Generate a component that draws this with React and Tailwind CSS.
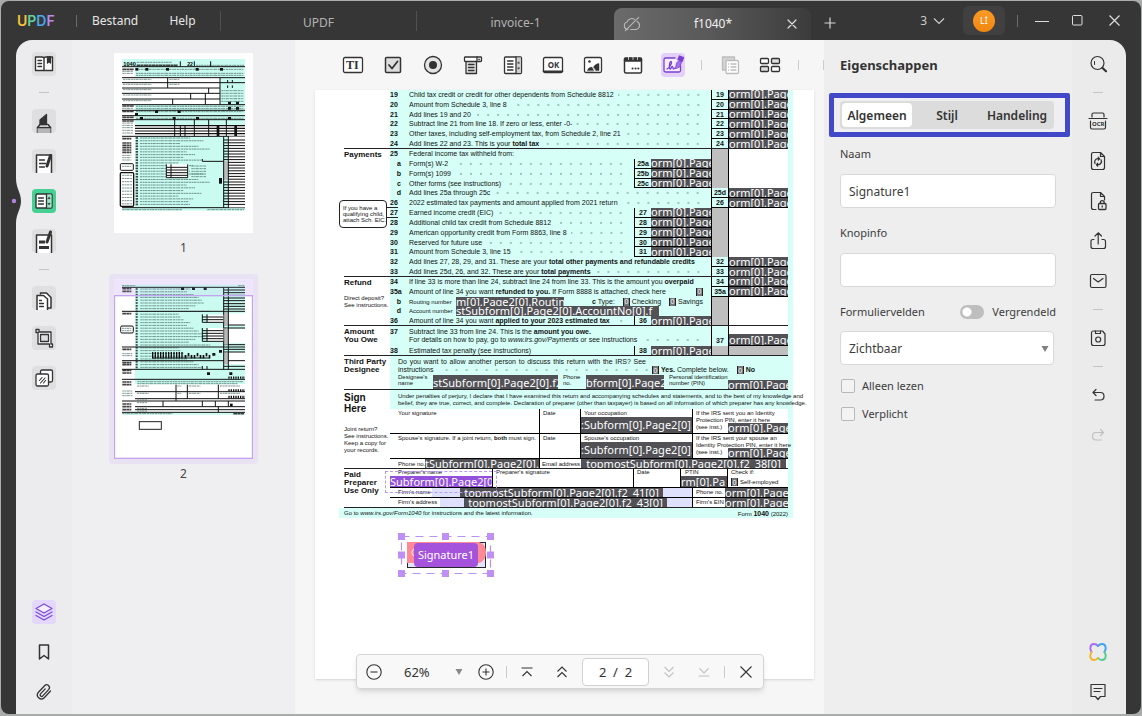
import React from "react";

const UI = "font-['Noto_Sans','Open_Sans',sans-serif]";

function Icon({ children, size = 24, className = "text-[#333333]" }) {
  return (
    <svg
      width={size}
      height={size}
      viewBox="0 0 24 24"
      fill="none"
      stroke="currentColor"
      strokeWidth="1.3"
      strokeLinecap="round"
      strokeLinejoin="round"
      className={className}
      aria-hidden="true"
    >
      {children}
    </svg>
  );
}

/* ---------- title bar ---------- */

function TitleBar() {
  return (
    <header className="flex h-[39px] shrink-0 items-center text-[12px] text-[#e6e6e6]">
      <div className="flex w-[75px] items-center pl-4 font-['Inter',sans-serif] text-[14px] font-semibold">
        <span className="text-[#f6c33a]">U</span>
        <span className="text-[#5fd39a]">P</span>
        <span className="text-[#4ba7e8]">D</span>
        <span className="text-[#b98cf2]">F</span>
      </div>
      <div className="h-3 w-px bg-[#6b6b6b]" />
      <button className="ml-[15px] w-[45px] whitespace-nowrap">Bestand</button>
      <button className="ml-8 w-[27px]">Help</button>
      <div className="ml-6 h-5 w-px bg-[#505050]" />
      <button className="mt-1 w-[195px] text-[#b4b4b4]">UPDF</button>
      <div className="h-5 w-px bg-[#505050]" />
      <button className="mt-1 w-[197px] text-[#b4b4b4]">invoice-1</button>
      <div className="flex h-8 w-[197px] items-center self-end rounded-t-lg bg-linear-to-r from-[#6b6b6b] via-[#585858] to-[#3c3c3c] px-2">
        <Icon size={20} className="text-[#b9b9b9]">
          <path d="M7 18.5a4.5 4.5 0 0 1-1-8.8A6 6 0 0 1 15 6.5M18 9a5 5 0 0 1-1 9.5h-6.500M4 20 20 4" />
        </Icon>
        <button className="flex-1 text-center text-[#f0f0f0]">f1040*</button>
        <button aria-label="Tabblad sluiten" className="pr-[3px]">
          <Icon size={16} className="text-[#e0e0e0]">
            <path d="M6 6 18 18M18 6 6 18" strokeWidth="1.8" />
          </Icon>
        </button>
      </div>
      <button aria-label="Nieuw tabblad" className="mt-1 ml-3">
        <svg width="14" height="14" viewBox="0 0 14 14" stroke="#d8d8d8" strokeWidth="1.2">
          <path d="M7 1.500V12.500M1.500 7H12.500" />
        </svg>
      </button>
      <div className="ml-auto flex items-center">
        <button className="flex items-center gap-[6px] pr-[18px] text-[#cccccc]">
          3
          <svg width="12" height="8" viewBox="0 0 12 8" fill="none" stroke="#cccccc" strokeWidth="1.2">
            <path d="M1 1.500 6 6.500 11 1.500" />
          </svg>
        </button>
        <div className="flex h-[29px] w-[42px] items-center justify-center rounded-md bg-[#404040]">
          <button className="h-[22px] w-[22px] rounded-full bg-linear-to-b from-[#fb9a26] to-[#f0860d] text-[9px] leading-[22px] text-white">
            Lİ
          </button>
        </div>
        <div className="ml-3 h-3 w-px bg-[#6b6b6b]" />
        <button aria-label="Minimaliseren" className="ml-[17px]">
          <svg width="14" height="14" viewBox="0 0 14 14" stroke="#dddddd">
            <path d="M0 7.500H14" />
          </svg>
        </button>
        <button aria-label="Maximaliseren" className="ml-[23px]">
          <svg width="11" height="11" viewBox="0 0 11 11" fill="none" stroke="#dddddd">
            <rect x="0.500" y="0.500" width="9.500" height="9.500" rx="1" />
          </svg>
        </button>
        <button aria-label="Sluiten" className="mr-[21px] ml-[26px]">
          <svg width="11" height="11" viewBox="0 0 11 11" stroke="#dddddd" strokeWidth="1.200">
            <path d="M0.500 0.500 10.500 10.500M10.500 0.500 0.500 10.500" />
          </svg>
        </button>
      </div>
    </header>
  );
}

/* ---------- left strip ---------- */

function ToolButton({ label, active, children }) {
  return (
    <button
      aria-label={label}
      className={
        "h-6 w-6 overflow-hidden rounded " +
        (active ? "bg-[#47d094]" : "bg-[#dfdfe1]")
      }
    >
      {children}
    </button>
  );
}

function Sep() {
  return <div className="h-px w-[10px] bg-[#c4c4c4]" />;
}

function LeftStrip() {
  return (
    <nav className="relative flex w-14 shrink-0 flex-col items-center gap-4 rounded-tl-2xl bg-[#ececee] pt-3 pb-[10px]">
      <svg className="absolute top-[138px] left-[-6px]" width="12" height="46" viewBox="0 0 12 46" aria-hidden="true">
        <path d="M0 0H6C6 11 11 14 11 23S6 35 6 46H0Z" fill="#363636" />
        <circle cx="4" cy="23" r="2.200" fill="#b184e0" />
      </svg>
      <ToolButton label="Lezer">
        <Icon>
          <path d="M3.500 5h6.500q2 0 2 1.500V18.500H3.500ZM12 6.500Q12 5 14 5h6.500V18.500H12M6 8.500h3.500M6 11.500h3.500M6 14.500h3.500" fill="#fff" strokeWidth="1.400" />
          <path d="M15.500 5h3v6l-1.500-1.400L15.500 11Z" fill="#333" />
        </Icon>
      </ToolButton>
      <Sep />
      <ToolButton label="Opmerking">
        <Icon>
          <path d="M5.500 24v-5.500l2.500-3h8l2.500 3V24" fill="#fff" strokeWidth="1.500" />
          <path d="M5.500 18.500h13V24h-13Z" fill="#b5b5b5" stroke="none" />
          <path d="M8 15.500v-4.500L14.500 5.500V15.500Z" fill="#333" />
          <path d="M5.500 18.500h13" />
        </Icon>
      </ToolButton>
      <ToolButton label="Bewerken">
        <Icon>
          <path d="M4.500 24V6h15v18" fill="#fff" strokeWidth="1.500" />
          <path d="M7.500 11h5M7.500 14.500h6M7.500 18h5" />
          <path d="M18.500 6.500 15 17" strokeWidth="3" />
        </Icon>
      </ToolButton>
      <ToolButton label="Formulier" active>
        <Icon>
          <rect x="4" y="5" width="16" height="14" rx="1" fill="#fff" strokeWidth="1.400" />
          <path d="M14.500 5.500h5v13h-5Z" fill="#9ce6c6" stroke="none" />
          <path d="M14.500 5v14M6.500 9h5M6.500 12h5M6.500 15h5" />
          <path d="m17.200 8.300 1 1.400h-2ZM17.200 15.700l1-1.400h-2Z" fill="#333" strokeWidth="0.600" />
        </Icon>
      </ToolButton>
      <ToolButton label="Redigeren">
        <Icon>
          <path d="M4.500 24V6h15v18" fill="#fff" strokeWidth="1.500" />
          <path d="M7 13h6M7 18.500h10" strokeWidth="2.800" strokeLinecap="butt" />
          <path d="M18.500 3 15 13" strokeWidth="3" />
        </Icon>
      </ToolButton>
      <Sep />
      <ToolButton label="Pagina's organiseren">
        <Icon>
          <path d="M8.500 8V7h6l4.500 4.500V22h-3" fill="#fff" strokeWidth="1.500" />
          <path d="M5 24V9.500h6.500L15.500 13v11" fill="#fff" strokeWidth="1.500" />
          <path d="M7.500 14.500h2M7.500 17.500h4M7.500 20.500h4" />
        </Icon>
      </ToolButton>
      <ToolButton label="Bijsnijden">
        <Icon>
          <path
            d="M4 3.500h3V6h12v12h1.500v3h-3V18H6V6.500H4ZM8.500 8.500v7h8v-7Z"
            fill="#fff"
            fillRule="evenodd"
          />
        </Icon>
      </ToolButton>
      <ToolButton label="Watermerk">
        <Icon>
          <rect x="8.500" y="4" width="12" height="12" rx="1.500" fill="#fff" />
          <rect x="4" y="8" width="12.500" height="12" rx="1.500" fill="#fff" />
          <path d="m7.500 14.500 2.500-3M8.500 17l4.500-5M11.500 17l2-2.500" strokeWidth="1.100" />
        </Icon>
      </ToolButton>
      <div className="flex-1" />
      <button aria-label="Lagen" className="h-6 w-6 rounded bg-[#e3d8fb]">
        <Icon className="text-[#7c4be0]">
          <path d="m12 4 8 4.500-8 4.500-8-4.500Z" fill="#f3edff" />
          <path d="m4 12 8 4.500 8-4.500M4 15.500 12 20l8-4.500" />
        </Icon>
      </button>
      <button aria-label="Bladwijzer" className="h-6 w-6">
        <Icon>
          <path d="M7.500 5h9v14L12 15.500 7.500 19Z" strokeWidth="1.500" />
        </Icon>
      </button>
      <button aria-label="Bijlage" className="h-6 w-6">
        <Icon>
          <path d="m18.500 11-6.300 6.800a4 4 0 0 1-5.800-5.500l6.200-6.600a2.800 2.800 0 0 1 4.200 3.700l-6 6.500a1.500 1.500 0 0 1-2.300-2l4.700-5" strokeWidth="1.300" />
        </Icon>
      </button>
    </nav>
  );
}

/* ---------- thumbnails ---------- */

const seq = (n) => Array.from({ length: n }, (_, i) => i);

function MicroText({ x, y, w, bold }) {
  return (
    <line
      x1={x}
      x2={x + w}
      y1={y}
      y2={y}
      stroke={bold ? "#222" : "#4a6a66"}
      strokeWidth={bold ? 5 : 3}
      strokeDasharray={bold ? "12 1 8 1" : "7 1.500 4 1 9 2"}
      opacity={bold ? 0.85 : 0.7}
    />
  );
}

function Bars({ d, w = 3 }) {
  return <path d={d} stroke="#111" strokeWidth={w} fill="none" />;
}

const WIDTHS = [150, 190, 120, 175, 210, 140, 165, 130, 185, 115, 160, 145];

function ThumbOne() {
  return (
    <svg viewBox="342 39 417 540" className="block h-[180px] w-[139px]" aria-hidden="true">
      <rect x="342" y="39" width="417" height="540" fill="#fff" />
      <path d="M366 57H735V82H366ZM405 82H735V112H405ZM660 112H735V193H660ZM405 193H735V240H405ZM405 240H735V256H405ZM405 288H735V512H405ZM366 500H735V512H366Z" fill="#c9fbf0" />
      <text x="370" y="78" fontSize="17" fontWeight="700" fontFamily="Liberation Sans">1040</text>
      <MicroText x={410} y={67} w={105} />
      <MicroText x={410} y={76} w={124} bold />
      <text x="562" y="77" fontSize="15" fontWeight="700" fontFamily="Liberation Sans">22</text>
      <MicroText x={588} y={76} w={144} />
      <Bars d="M541 64V80M583 64V80M632 64V80" />
      <Bars d="M366 80H735M366 113H735M366 128H735M366 144H660M366 160H660M366 177H660M366 194H735M366 211H735M366 227H735M366 239H735M366 289H735M366 503H735" />
      <Bars d="M503 113V144M626 144V160M572 160V177M616 160V194M518 177V194M660 113V194M683 120V128M697 120V128M683 136V144M697 136V144M524 239V289M583 239V289M626 239V289M679 239V289" />
      {[88, 198, 214, 232, 243].map((y) => (
        <MicroText key={y} x={367} y={y} w={35} bold />
      ))}
      {[94, 100, 205, 249, 256, 263, 271, 279].map((y) => (
        <MicroText key={y} x={367} y={y} w={32} />
      ))}
      {[88, 100, 106, 199, 206, 215, 235].map((y) => (
        <MicroText key={y} x={408} y={y} w={322} />
      ))}
      {[118, 133, 149, 165, 182].map((y) => (
        <MicroText key={y} x={369} y={y} w={85} />
      ))}
      {[118, 133].map((y) => (
        <MicroText key={y} x={508} y={y} w={30} />
      ))}
      {[152, 160, 168, 176, 184].map((y) => (
        <MicroText key={y} x={664} y={y} w={66} />
      ))}
      {[406, 436, 498, 587, 660].map((x) => (
        <rect key={x} x={x} y="84" width="9" height="8" fill="#111" />
      ))}
      {[465, 533].map((x) => (
        <rect key={x} x={x} y="211" width="9" height="8" fill="#111" />
      ))}
      {[420, 518, 588, 684].map((x) => (
        <rect key={x} x={x} y="231" width="9" height="8" fill="#111" />
      ))}
      {[684, 708].map((x) => (
        <path key={x} d={`M${x} 185h9v8h-9ZM${x} 201h9v8h-9Z`} fill="#111" />
      ))}
      <rect x="405" y="219" width="9" height="8" fill="#111" />
      <Bars d="M405 257H735M405 265H735M405 273H735M405 281H735" w={3.500} />
      <Bars d="M541 257V289M555 257V289" />
      {[650, 703].map((x) => (
        <rect key={x} x={x} y="257" width="8" height="31" fill="#111" />
      ))}
      {seq(25).map((i) => (
        <g key={i}>
          <MicroText x={420} y={294 + i * 8.300} w={WIDTHS[i % 12]} />
          <MicroText x={407} y={294 + i * 8.300} w={7} bold />
        </g>
      ))}
      <rect x="686" y="290" width="49" height="212" fill="#fff" />
      {seq(24).map((i) => (
        <path key={i} d={`M671 ${300 + i * 8.400}H735`} stroke="#111" strokeWidth="3" />
      ))}
      <rect x="671" y="364" width="13" height="56" fill="#bdbdbd" />
      <Bars d="M671 289V503M685 289V503" />
      <rect x="499" y="373" width="66" height="40" fill="#fff" />
      <Bars d="M499 373V413M513 373V413M499 382H563M499 390H563M499 398H563M499 406H563M499 413H563M563 373V413M607 357V364H671" />
      {[378, 386, 394, 402, 410].map((y) => (
        <MicroText key={y} x={574} y={y} w={44} />
      ))}
      <rect x="657" y="414" width="9" height="17" fill="#111" />
      {[296, 309, 316, 323, 330, 337].map((y) => (
        <MicroText key={y} x={367} y={y} w={27} bold />
      ))}
      {[346, 353, 360].map((y) => (
        <MicroText key={y} x={367} y={y} w={27} />
      ))}
      <rect x="361" y="371" width="39" height="20" rx="3" fill="#fff" stroke="#111" strokeWidth="3" />
      <MicroText x={366} y={379} w={28} />
      <rect x="361" y="398" width="40" height="101" rx="3" fill="#fff" stroke="#111" strokeWidth="4" />
      {seq(10).map((i) => (
        <MicroText key={i} x={366} y={406 + i * 9.500} w={30} />
      ))}
      <MicroText x={367} y={509} w={180} />
      <MicroText x={622} y={509} w={110} />
    </svg>
  );
}

function ThumbTwo() {
  return (
    <svg viewBox="342 147 417 540" className="block h-[180px] w-[139px]" aria-hidden="true">
      <rect x="342" y="147" width="417" height="540" fill="#fff" />
      <rect x="342" y="147" width="417" height="50" fill="#f4eefe" />
      <path d="M366 164H735V171H366ZM405 171H735V463H405ZM366 546H735V554H366Z" fill="#c9fbf0" />
      <path d="M686 250H735V285H686ZM686 296H735V340H686ZM686 366H735V403H686Z" fill="#fff" />
      <MicroText x={366} y={167} w={40} />
      <MicroText x={715} y={167} w={18} />
      {seq(29).map((i) => (
        <g key={i}>
          <MicroText x={421} y={177 + i * 8.400} w={WIDTHS[(i * 5) % 12]} />
          <MicroText x={407} y={177 + i * 8.400} w={6} bold />
        </g>
      ))}
      {[176, 184, 251, 358, 398, 404, 421, 429, 456, 464, 522, 530, 539].map((y) => (
        <MicroText key={y} x={367} y={y} w={27} bold />
      ))}
      {[371, 377, 483, 490, 497].map((y) => (
        <MicroText key={y} x={367} y={y} w={30} />
      ))}
      <Bars d="M366 172H735M366 244H735M366 351H735M366 392H735M366 418H735M366 448H735" />
      {[180, 188, 196, 204, 212, 221, 229, 237, 285, 294, 344, 358, 366, 409].map((y) => (
        <path key={y} d={`M671 ${y}H735`} stroke="#111" strokeWidth="3" />
      ))}
      <rect x="672" y="246" width="12" height="42" fill="#b8b8b8" />
      <rect x="672" y="296" width="12" height="48" fill="#b8b8b8" />
      <rect x="672" y="368" width="12" height="35" fill="#b8b8b8" />
      <Bars d="M671 172V418M685 172V418" />
      <path d="M623 254H670V277H623ZM623 294H670V334H623Z" fill="#fff" />
      <Bars d="M607 253V277M621 253V277M607 261H670M607 269H670M607 277H670M607 294V334M621 294V334M607 302H670M607 310H670M607 318H670M607 326H670M607 334H670M607 408V418M621 408V418" />
      {seq(12).map((i) => (
        <rect key={i} x={456 + i * 8} y="366" width="4" height="19" fill="#111" />
      ))}
      {seq(9).map((i) => (
        <rect key={i} x={554 + i * 9} y={i % 3 === 1 ? 369 : 375} width="5" height="10" fill="#111" />
      ))}
      <Bars d="M456 384H630" />
      {[543, 576, 611].map((x) => (
        <rect key={x} x={x} y="172" width="9" height="8" fill="#111" />
      ))}
      <path d="M657 360h9v8h-9ZM637 369h9v8h-9ZM621 427h9v8h-9ZM688 427h9v8h-9Z" fill="#111" />
      <rect x="405" y="464" width="330" height="82" fill="#fff" />
      {[443, 481, 501].map((y) => (
        <path key={y} d={`M685 ${y}H735`} stroke="#111" strokeWidth="7" strokeDasharray="4 3" />
      ))}
      <Bars d="M528 464V513M562 464V506M655 464V506M489 513V530M607 513V530M646 513V530M685 513V530M655 530V547M405 485H735M405 506H735M366 513H735M405 530H735M405 539H735M366 547H735" />
      <rect x="690" y="521" width="8" height="8" fill="#111" />
      {[468, 490].map((y) => (
        <g key={y}>
          <MicroText x={411} y={y} w={35} />
          <MicroText x={532} y={y} w={12} />
          <MicroText x={566} y={y} w={35} />
          <MicroText x={660} y={y} w={60} />
        </g>
      ))}
      {[510, 518, 535, 543].map((y) => (
        <MicroText key={y} x={411} y={y} w={30} />
      ))}
      <MicroText x={412} y={455} w={318} />
      <MicroText x={412} y={461} w={300} />
      <rect x="362" y="288" width="38" height="21" rx="4" fill="#fff" stroke="#111" strokeWidth="3" />
      <MicroText x={366} y={295} w={28} />
      <MicroText x={366} y={302} w={28} />
      <MicroText x={367} y={551} w={150} />
      <MicroText x={700} y={551} w={32} bold />
      <rect x="418" y="575" width="66" height="23" fill="#fff" stroke="#222" strokeWidth="3" />
      <path d="M342 148H758V197H342Z" fill="#c9a8f5" opacity="0.120" />
      <rect x="343.500" y="197" width="414" height="488" fill="none" stroke="#c2a4ef" strokeWidth="4" />
    </svg>
  );
}

function Thumbnails() {
  return (
    <aside className="flex w-[223px] shrink-0 flex-col items-center bg-[#efeff1] pt-[13px] text-[12px] text-[#444444]">
      <figure className="flex flex-col items-center">
        <ThumbOne />
        <figcaption className="mt-[5px] leading-5">1</figcaption>
      </figure>
      <figure className="mt-4 flex flex-col items-center">
        <div className="rounded bg-[#e8e2f3] p-[5px]">
          <ThumbTwo />
        </div>
        <figcaption className="leading-5">2</figcaption>
      </figure>
    </aside>
  );
}

/* ---------- form toolbar ---------- */

function FormToolbar() {
  return (
    <div className="flex h-[50px] shrink-0 items-center gap-4 overflow-hidden pl-[46px]">
      <button aria-label="Tekstveld" className="h-6 w-6 shrink-0">
        <Icon>
          <rect x="2.500" y="4.500" width="19" height="15" rx="1.500" fill="#fff" strokeWidth="1.300" />
          <text x="5" y="16.300" fontSize="12" fontWeight="700" fontFamily="Liberation Serif" fill="#333" stroke="none">TI</text>
        </Icon>
      </button>
      <button aria-label="Selectievakje" className="h-6 w-6 shrink-0">
        <Icon>
          <rect x="4.500" y="4.500" width="15" height="15" rx="1" fill="#dedede" strokeWidth="1.500" />
          <path d="m8 12 3 3.500 5.500-7" strokeWidth="1.800" />
        </Icon>
      </button>
      <button aria-label="Keuzerondje" className="h-6 w-6 shrink-0">
        <Icon>
          <circle cx="12" cy="12" r="8.500" fill="#e4e4e4" />
          <circle cx="12" cy="12" r="4" fill="#333" stroke="none" />
        </Icon>
      </button>
      <button aria-label="Vervolgkeuzelijst" className="h-6 w-6 shrink-0">
        <Icon>
          <path d="M5 8h10.500v12.500H5Z" fill="#dedede" />
          <rect x="3.500" y="4" width="17" height="4.500" rx="0.800" fill="#fff" />
          <path d="M16 4v4M7.500 11.500h5.500M7.500 14.500h5.500M7.500 17.500h5.500" />
          <path d="m18.300 7 .8-1h-1.600Z" fill="#333" strokeWidth="0.500" />
        </Icon>
      </button>
      <button aria-label="Keuzelijst" className="h-6 w-6 shrink-0">
        <Icon>
          <rect x="3.500" y="4" width="17" height="16.500" rx="1" fill="#fff" />
          <path d="M15 4.500h5v15.500h-5Z" fill="#cfcfcf" stroke="none" />
          <path d="M15 4v16.500M6.500 8h5.500M6.500 11h5.500M6.500 14h5.500M6.500 17h5.500" />
          <path d="m17.700 9 .9 1.200h-1.800ZM17.700 16l.9-1.200h-1.800Z" fill="#333" strokeWidth="0.500" />
        </Icon>
      </button>
      <button aria-label="Knop" className="h-6 w-6 shrink-0">
        <Icon>
          <rect x="2.500" y="4.500" width="19" height="15" rx="1.500" fill="#fff" />
          <path d="M2.500 18.300h19" strokeWidth="1.800" />
          <text x="6.700" y="14.500" fontSize="8" fontWeight="700" fontFamily="Noto Sans" fill="#333" stroke="none">OK</text>
        </Icon>
      </button>
      <button aria-label="Afbeelding" className="h-6 w-6 shrink-0">
        <Icon>
          <rect x="3.500" y="4.500" width="17" height="15" rx="1.500" fill="#fff" />
          <path d="M6.500 17.500q1-3.500 4.500-3.200l1.500 3.200ZM12.500 14q2-3.500 5.500-3.500v7h-3Z" fill="#333" strokeWidth="0.500" />
          <circle cx="8.500" cy="8.500" r="1.300" fill="#333" stroke="none" />
        </Icon>
      </button>
      <button aria-label="Datum" className="h-6 w-6 shrink-0">
        <Icon>
          <rect x="3.500" y="5" width="17" height="15" rx="1.500" fill="#fff" strokeWidth="1.500" />
          <path d="M3.500 8V5.500h17V8Z" fill="#333" />
          <path d="M7.500 3.500v3M12 3.500v3M16.500 3.500v3" stroke="#fff" strokeWidth="0.700" />
          <path d="M11.500 15.500h.1M14.500 15.500h.1M17.300 15.500h.1" strokeWidth="2" />
        </Icon>
      </button>
      <button aria-label="Handtekening" className="h-6 w-6 shrink-0 rounded bg-[#e2d0fb]">
        <Icon className="text-[#7b3fd0]">
          <path d="M14 5H4.500Q3 5 3 6.500V17.500Q3 19 4.500 19H18q1.500 0 1.500-1.500V13" fill="#f5efff" />
          <path d="M6 16c4-2 5.500-8 3.800-7.500C8 9 8 17 9.500 16c1-.8 1-3 2-2.500.8.300 0 2.500 1 2.500l1.500-1" strokeWidth="1.300" />
          <path d="m14.500 15.500 1-5.500 2.500-2.500 2.500 2-1.500 4Z" fill="#a46cf0" strokeWidth="0.800" />
          <path d="m17 6.500 1.500-3.500 4 1.500-1.500 4Z" fill="#7b3fd0" />
        </Icon>
      </button>
      <div className="h-[10px] w-px shrink-0 bg-[#cccccc]" />
      <button aria-label="Kopiëren" className="h-6 w-6 shrink-0">
        <Icon className="text-[#bcbcbc]">
          <path d="M4.500 4H17v4H8v9H4.500Z" fill="#d4d4d4" stroke="none" />
          <path d="M8 17H4.500V4H16.500V7" />
          <rect x="8" y="7.500" width="12.500" height="13" rx="1" fill="#fff" />
          <path d="M10.500 11h.1M13 11h5M10.500 14h.1M13 14h5M10.500 17h.1M13 17h5" />
        </Icon>
      </button>
      <button aria-label="Rangschikken" className="h-6 w-6 shrink-0">
        <Icon>
          <rect x="2.500" y="5.500" width="8" height="5" rx="1" fill="#fff" />
          <rect x="13.500" y="5.500" width="8" height="5" rx="1" fill="#dedede" />
          <rect x="2.500" y="13.500" width="8" height="5" rx="1" fill="#dedede" />
          <rect x="13.500" y="13.500" width="8" height="5" rx="1" fill="#fff" />
        </Icon>
      </button>
      <div className="h-[10px] w-px shrink-0 bg-[#cccccc]" />
      <div className="ml-2 h-[10px] w-px shrink-0 bg-[#cccccc]" />
    </div>
  );
}

/* ---------- tax form page ---------- */

function Field({ text = "orm[0].Page", className = "", center }) {
  return (
    <div
      className={
        "flex items-center overflow-hidden bg-[#515156] text-[11px] leading-[10px] whitespace-nowrap text-white font-['Noto_Sans',sans-serif] " +
        (center ? "justify-center " : "") +
        className
      }
    >
      {text}
    </div>
  );
}

function Tick() {
  return (
    <span className="inline-flex h-[8px] w-[7px] shrink-0 items-center justify-center border-x border-[#222222] bg-[#77777b] text-[7px] leading-none text-white">
      0
    </span>
  );
}

function Dots() {
  return (
    <span className="min-w-0 flex-1 bg-[radial-gradient(circle,#7a9a95_0.5px,transparent_1px)] bg-[length:10px_12px] bg-right bg-repeat-x" />
  );
}

/* One numbered line: label, leader dots, optional inner amount, outer amount. */
function Line({ n, sub, box, right, filled, grey, plain, last, children }) {
  return (
    <div className="flex min-h-0 flex-1 items-stretch">
      <div className="flex w-[19px] shrink-0 pr-2 font-bold whitespace-nowrap">
        {n}
        {sub && <span className="ml-auto">{sub}</span>}
      </div>
      <div className="flex min-w-0 flex-1 gap-1 overflow-hidden pr-2 whitespace-nowrap">
        <span>{children}</span>
        {!plain && <Dots />}
      </div>
      {box && (
        <div className="flex w-[77px] shrink-0 border-b border-l border-black">
          <span className="w-4 text-center font-bold">{box}</span>
          <Field className="flex-1" />
        </div>
      )}
      <div
        className={
          "w-[18px] shrink-0 border-x border-black text-center font-bold " +
          (grey ? "bg-[#bfbfc0]" : last ? "" : "border-b")
        }
      >
        {right}
      </div>
      {filled ? (
        <Field className={"w-[59px] shrink-0 " + (last ? "" : "border-b border-black")} />
      ) : (
        <div className={"w-[59px] shrink-0 " + (plain === "greyEnd" ? "bg-[#bfbfc0]" : "bg-white")} />
      )}
      <div className="w-[5px] shrink-0" />
    </div>
  );
}

function Section({ title, note, height, big, children }) {
  return (
    <section className={"relative flex " + height}>
      <div className="w-[51px] shrink-0 bg-white pl-[5px] whitespace-nowrap">
        <h3 className={(big ? "pt-[2px] text-[10px] leading-[11px]" : "pt-[2px] text-[8px] leading-[8px]") + " font-bold whitespace-pre"}>
          {title}
        </h3>
        {note}
      </div>
      <div className="flex min-w-0 flex-1 flex-col bg-[#d5fff7]">{children}</div>
      <div className="absolute right-[5px] bottom-0 left-[5px] h-px bg-[#222222]" />
    </section>
  );
}

function SignRow({ first, mid, third, pinA }) {
  return (
    <div className="flex h-[25px] border-b border-black text-[6px] leading-[8px]">
      <div className="w-[149px] pl-2">{first}</div>
      <div className="w-[42px] border-x border-black pl-[3px]">Date</div>
      <div className="flex w-[112px] flex-col border-r border-black">
        <span className="pl-[3px]">{third}</span>
        <Field className="min-h-0 flex-1" text={mid} />
      </div>
      <div className="relative w-[95px] pt-px pl-[3px] leading-[7px] whitespace-pre">
        {pinA}
        <Field className="absolute right-0 bottom-0 h-[10px] w-[60px]" />
      </div>
    </div>
  );
}

function TaxForm() {
  return (
    <div className="ml-6 w-[454px] text-[7px] leading-[10px] text-[#111111] font-['Liberation_Sans',sans-serif]">
      <Section height="h-[59px]">
        <Line n="19" right="19" filled>Child tax credit or credit for other dependents from Schedule 8812</Line>
        <Line n="20" right="20" filled>Amount from Schedule 3, line 8</Line>
        <Line n="21" right="21" filled>Add lines 19 and 20</Line>
        <Line n="22" right="22" filled>Subtract line 21 from line 18. If zero or less, enter -0-</Line>
        <Line n="23" right="23" filled>Other taxes, including self-employment tax, from Schedule 2, line 21</Line>
        <Line n="24" right="24" filled last>Add lines 22 and 23. This is your <b>total tax</b></Line>
      </Section>

      <Section title="Payments" height="h-[128px]">
        <Line n="25" grey plain>Federal income tax withheld from:</Line>
        <Line sub="a" box="25a" grey>Form(s) W-2</Line>
        <Line sub="b" box="25b" grey>Form(s) 1099</Line>
        <Line sub="c" box="25c" grey>Other forms (see instructions)</Line>
        <Line sub="d" right="25d" filled>Add lines 25a through 25c</Line>
        <Line n="26" right="26" filled>2022 estimated tax payments and amount applied from 2021 return</Line>
        <Line n="27" box="27" grey>Earned income credit (EIC)</Line>
        <Line n="28" box="28" grey>Additional child tax credit from Schedule 8812</Line>
        <Line n="29" box="29" grey>American opportunity credit from Form 8863, line 8</Line>
        <Line n="30" box="30" grey>Reserved for future use</Line>
        <Line n="31" box="31" grey>Amount from Schedule 3, line 15</Line>
        <Line n="32" right="32" filled>Add lines 27, 28, 29, and 31. These are your <b>total other payments and refundable credits</b></Line>
        <Line n="33" right="33" filled last>Add lines 25d, 26, and 32. These are your <b>total payments</b></Line>
        <div className="absolute top-[58px] left-[47px] h-[11px] w-[12px] border-y border-[#222222]" />
        <div className="absolute top-[51px] left-0 h-[28px] w-[48px] rounded border border-[#222222] bg-white pt-[4px] pl-[3px] text-[6px] leading-[6px] whitespace-nowrap">
          If you have a<br />qualifying child,<br />attach Sch. EIC.
        </div>
      </Section>

      <Section
        title="Refund"
        height="h-[49px]"
        note={<p className="mt-2 text-[6px] leading-[7px]">Direct deposit?<br />See instructions.</p>}
      >
        <Line n="34" right="34" filled plain>If line 33 is more than line 24, subtract line 24 from line 33. This is the amount you <b>overpaid</b></Line>
        <Line n="35a" right="35a" filled plain>
          <span className="flex w-[294px] items-center">
            <span className="mr-1">Amount of line 34 you want <b>refunded to you.</b> If Form 8888 is attached, check here</span>
            <Dots />
            <Tick />
          </span>
        </Line>
        <Line sub="b" grey plain>
          <span className="flex items-stretch">
            <span className="w-[47px] text-[6px]">Routing number</span>
            <Field className="w-[108px]" text="m[0].Page2[0].Routin" />
            <span className="ml-7"><b>c</b> Type:</span>
            <span className="ml-2 flex items-center gap-[2px]"><Tick /> Checking</span>
            <span className="ml-2 flex items-center gap-[2px]"><Tick /> Savings</span>
          </span>
        </Line>
        <Line sub="d" grey plain>
          <span className="flex items-stretch">
            <span className="w-[47px] text-[6px]">Account number</span>
            <Field className="w-[203px]" text="stSubform[0].Page2[0].AccountNo[0].f" />
          </span>
        </Line>
        <Line n="36" box="36" grey>Amount of line 34 you want <b>applied to your 2023 estimated tax</b></Line>
      </Section>

      <Section title={"Amount\nYou Owe"} height="h-[30px]">
        <div className="flex h-5 leading-[8px]">
          <div className="w-[19px] shrink-0 pt-[2px] font-bold">37</div>
          <div className="min-w-0 flex-1 pt-[2px] whitespace-nowrap">
            Subtract line 33 from line 24. This is the <b>amount you owe.</b>
            <div className="flex gap-1 pr-2">
              <span>For details on how to pay, go to <i>www.irs.gov/Payments</i> or see instructions</span>
              <Dots />
            </div>
          </div>
          <div className="w-[18px] border-x border-black pt-[11px] text-center font-bold">37</div>
          <div className="flex w-[59px] flex-col justify-end border-b border-black bg-white">
            <Field className="h-[11px]" />
          </div>
          <div className="w-[5px]" />
        </div>
        <Line n="38" box="38" grey plain="greyEnd">Estimated tax penalty (see instructions)</Line>
      </Section>

      <Section title={"Third Party\nDesignee"} height="h-[34px]">
        <div className="flex h-full flex-col pl-2 leading-[8px]">
          <div className="w-[248px] pt-[2px] text-justify [text-align-last:justify]">
            Do you want to allow another person to discuss this return with the IRS? See
          </div>
          <div className="flex whitespace-nowrap">
            <span className="flex w-[254px] gap-2">instructions <Dots /></span>
            <span className="flex items-center gap-[2px]"><Tick /> <span><b>Yes.</b> Complete below.</span></span>
            <span className="ml-2 flex items-center gap-[2px]"><Tick /> <b>No</b></span>
          </div>
          <div className="mt-auto flex items-end pb-px text-[6px] leading-[6px]">
            <span className="w-[35px] pb-1">Designee&apos;s<br />name</span>
            <Field className="h-[15px] w-[125px]" text="stSubform[0].Page2[0].f2" />
            <span className="w-[28px] pb-1 pl-[5px]">Phone<br />no.</span>
            <Field className="h-[15px] w-[78px]" text="bform[0].Page2" />
            <span className="w-[64px] pb-1 pl-[5px] whitespace-nowrap">Personal identification<br />number (PIN)</span>
            <Field className="h-[10px] w-[60px]" />
          </div>
        </div>
      </Section>

      <Section
        title={"Sign\nHere"}
        big
        height="h-[79px]"
        note={
          <p className="mt-3 text-[6px] leading-[7px]">
            Joint return?<br />See instructions.<br />Keep a copy for<br />your records.
          </p>
        }
      >
        <p className="h-[19px] pt-[3px] pl-2 text-[6px] leading-[7px] whitespace-nowrap">
          Under penalties of perjury, I declare that I have examined this return and accompanying schedules and statements, and to the best of my knowledge and
          <br />
          belief, they are true, correct, and complete. Declaration of preparer (other than taxpayer) is based on all information of which preparer has any knowledge.
        </p>
        <div className="mr-[5px] flex-1 bg-white">
          <SignRow
            first="Your signature"
            third="Your occupation"
            mid=":Subform[0].Page2[0]."
            pinA={"If the IRS sent you an Identity\nProtection PIN, enter it here\n(see inst.)"}
          />
          <SignRow
            first={<>Spouse&apos;s signature. If a joint return, <b>both</b> must sign.</>}
            third="Spouse's occupation"
            mid=":Subform[0].Page2[0]."
            pinA={"If the IRS sent your spouse an\nIdentity Protection PIN, enter it here\n(see inst.)"}
          />
          <div className="flex h-[10px] text-[6px]">
            <span className="w-[35px] pl-2 whitespace-nowrap">Phone no.</span>
            <Field className="w-[114px]" text="tSubform[0].Page2[0]." />
            <span className="w-[42px] border-l border-black pl-[2px] whitespace-nowrap">Email address</span>
            <Field className="w-[205px]" center text="topmostSubform[0].Page2[0].f2_38[0]" />
          </div>
        </div>
      </Section>

      <Section title={"Paid\nPreparer\nUse Only"} height="h-[39px]">
        <div className="mr-[5px] flex-1 bg-white text-[6px] leading-[7px]">
          <div className="flex h-[19px] border-b border-black">
            <div className="flex w-[103px] flex-col border-r border-black">
              <span className="pl-2">Preparer&apos;s name</span>
              <div className="flex flex-1 items-center overflow-hidden bg-[#9250dd] text-[11px] text-white font-['Noto_Sans',sans-serif]">
                Subform[0].Page2[0]
              </div>
            </div>
            <div className="w-[141px] border-r border-black pl-[3px]">Preparer&apos;s signature</div>
            <div className="w-[47px] border-r border-black pl-[3px]">Date</div>
            <div className="flex w-[47px] flex-col border-r border-black">
              <span className="pl-1">PTIN</span>
              <Field className="flex-1" text="rm[0].Pa" />
            </div>
            <div className="pl-[3px]">
              Check if:
              <div className="mt-[2px] flex items-center gap-[2px]"><Tick /> Self-employed</div>
            </div>
          </div>
          <div className="flex h-[10px] border-b border-black leading-[9px]">
            <span className="w-[42px] pl-2">Firm&apos;s name</span>
            <span className="w-[28px] bg-[#dfe0fb]" />
            <Field className="w-[203px]" center text="topmostSubform[0].Page2[0].f2_41[0]" />
            <span className="w-[29px] bg-[#dfe0fb]" />
            <span className="w-[33px] border-l border-black pl-[3px]">Phone no.</span>
            <Field className="w-[63px]" />
          </div>
          <div className="flex h-[10px] leading-[9px]">
            <span className="w-[50px] pl-2 whitespace-nowrap">Firm&apos;s address</span>
            <span className="w-[24px] bg-[#dfe0fb]" />
            <Field className="w-[203px]" center text="topmostSubform[0].Page2[0].f2_43[0]" />
            <span className="w-[25px] bg-[#dfe0fb]" />
            <span className="w-[33px] border-l border-black pl-[3px]">Firm&apos;s EIN</span>
            <Field className="w-[63px]" />
          </div>
        </div>
        <div className="absolute top-[2px] left-[46px] h-[22px] w-[112px] border border-dashed border-[#b99af0]" />
      </Section>

      <footer className="flex h-[10px] justify-between bg-[#d5fff7] px-[5px] text-[6px] leading-[11px]">
        <span>Go to <i>www.irs.gov/Form1040</i> for instructions and the latest information.</span>
        <span>Form <b className="text-[7px]">1040</b> (2022)</span>
      </footer>
    </div>
  );
}

function SignatureField() {
  return (
    <div className="absolute top-[446px] left-[86px] h-[38px] w-[90px]">
      <svg className="absolute inset-0 overflow-visible" width="90" height="38" viewBox="0 0 90 38" aria-hidden="true">
        <rect x="6.500" y="6.500" width="78" height="25" fill="#e2e4fb" stroke="#26282c" />
        <path d="M6 6H78Q85 8 85 16.500T78 27H6Z" fill="#ff8a96" />
        <path d="M15.500 13.500a3 3.500 0 1 0 0 6" fill="none" stroke="#fff" />
        <rect x="0.500" y="0.500" width="89" height="37" fill="none" stroke="#b894f2" strokeWidth="1.200" strokeDasharray="8 6" />
        <path
          d="M-3 -3h7v7h-7ZM41 -3h7v7h-7ZM86 -3h7v7h-7ZM-3 15.500h7v7h-7ZM86 15.500h7v7h-7ZM-3 34h7v7h-7ZM41 34h7v7h-7ZM86 34h7v7h-7Z"
          fill="#c08ff5"
        />
      </svg>
      <span className="absolute top-[7px] left-[13px] flex h-6 w-[64px] items-center justify-center rounded bg-[#a553dc] pt-px text-[11px] text-white">
        Signature1
      </span>
    </div>
  );
}

/* ---------- page navigation ---------- */

function BarIcon({ label, dim, children }) {
  return (
    <button aria-label={label} className="block">
      <svg
        width="16"
        height="16"
        viewBox="0 0 16 16"
        fill="none"
        stroke={dim ? "#c2c2c2" : "#333333"}
        strokeWidth="1.100"
        className="block"
      >
        {children}
      </svg>
    </button>
  );
}

function PageBar() {
  return (
    <div className="absolute bottom-[25px] left-[61px] flex h-[35px] w-[408px] items-center rounded border border-[#d5d5d5] bg-[#f8f8f8] px-[9px] shadow-md">
      <BarIcon label="Uitzoomen">
        <circle cx="8" cy="8" r="7.200" />
        <path d="M4.500 8h7" />
      </BarIcon>
      <label className="relative ml-[22px] flex items-center">
        <select aria-label="Zoomniveau" defaultValue="62" className="w-[59px] appearance-none bg-transparent text-[13px] leading-5 text-[#333333]">
          <option value="62">62%</option>
          <option value="100">100%</option>
        </select>
        <svg className="pointer-events-none absolute right-0" width="8" height="6" viewBox="0 0 8 6" fill="#888888">
          <path d="M0.500 0h7L4 6Z" />
        </svg>
      </label>
      <span className="ml-[15px]">
        <BarIcon label="Inzoomen">
          <circle cx="8" cy="8" r="7.200" />
          <path d="M4.500 8h7M8 4.500v7" />
        </BarIcon>
      </span>
      <div className="ml-3 h-3 w-px bg-[#cccccc]" />
      <span className="ml-3">
        <BarIcon label="Eerste pagina">
          <path d="M2.500 4h11M3.500 12 8 7.500 12.500 12" />
        </BarIcon>
      </span>
      <span className="ml-[19px]">
        <BarIcon label="Vorige pagina">
          <path d="M3.500 7.500 8 3l4.500 4.500M3.500 13 8 8.500 12.500 13" />
        </BarIcon>
      </span>
      <input
        aria-label="Pagina"
        defaultValue="2  /  2"
        className="ml-3 h-7 w-[67px] rounded border border-[#d0d0d0] bg-white text-center text-[13px] text-[#333333]"
      />
      <span className="ml-3">
        <BarIcon label="Volgende pagina" dim>
          <path d="M3.500 3 8 7.500 12.500 3M3.500 8.500 8 13l4.500-4.500" />
        </BarIcon>
      </span>
      <span className="ml-[19px]">
        <BarIcon label="Laatste pagina" dim>
          <path d="M3.500 4.500 8 9l4.500-4.500M2.500 12h11" />
        </BarIcon>
      </span>
      <div className="ml-3 h-3 w-px bg-[#cccccc]" />
      <span className="ml-auto">
        <BarIcon label="Balk sluiten">
          <path d="M2.500 2.500l11 11M13.500 2.500l-11 11" />
        </BarIcon>
      </span>
    </div>
  );
}

/* ---------- properties panel ---------- */

function Properties() {
  return (
    <aside className="flex w-[248px] shrink-0 flex-col bg-[#eeeeee] text-[11px] text-[#3c3c3c]">
      <h2 className="mt-3 px-4 text-[13px] leading-[26px] font-bold text-[#333333]">Eigenschappen</h2>
      <div className="mt-[15px] ml-[5px] w-[241px] rounded-xs border-5 border-[#4149c8] bg-[#eeeef3] px-[6px] py-[3px]">
        <div role="tablist" className="grid w-[214px] grid-cols-3 rounded bg-[#dcdcdc] p-[2px] text-[12px] font-semibold text-[#333333]">
          <button role="tab" aria-selected="true" className="h-6 rounded bg-white pt-px">Algemeen</button>
          <button role="tab" className="h-6 pt-px">Stijl</button>
          <button role="tab" className="h-6 pt-px">Handeling</button>
        </div>
      </div>
      <div className="flex flex-col px-4 pt-[7px]">
        <label htmlFor="naam" className="leading-5">Naam</label>
        <input
          id="naam"
          defaultValue="Signature1"
          className="mt-[10px] h-[34px] rounded border border-[#d8d8d8] bg-white px-2 pt-px text-[12px]"
        />
        <label htmlFor="info" className="mt-[15px] leading-5">Knopinfo</label>
        <input id="info" className="mt-[10px] h-[34px] rounded border border-[#d8d8d8] bg-white px-2 pt-px text-[12px]" />
        <div className="mt-[15px] flex items-center leading-5">
          <label htmlFor="zicht">Formuliervelden</label>
          <label className="ml-auto flex items-center gap-2">
            <input
              type="checkbox"
              role="switch"
              className="h-[14px] w-6 appearance-none rounded-full bg-[#bebebe] bg-[radial-gradient(circle_at_7px_7px,#ffffff_4px,transparent_5px)]"
            />
            Vergrendeld
          </label>
        </div>
        <div className="relative mt-[9px] w-[214px]">
          <select
            id="zicht"
            defaultValue="zichtbaar"
            className="h-[34px] w-full appearance-none rounded border border-[#d8d8d8] bg-white px-2 pt-px text-[12px]"
          >
            <option value="zichtbaar">Zichtbaar</option>
            <option value="verborgen">Verborgen</option>
          </select>
          <svg className="pointer-events-none absolute top-[15px] right-[5px]" width="8" height="6" viewBox="0 0 8 6" fill="#808080">
            <path d="M0.500 0h7L4 6Z" />
          </svg>
        </div>
        <label className="mt-[11px] flex items-center gap-[7px] leading-5">
          <input type="checkbox" className="ml-px h-[14px] w-[14px] appearance-none rounded-xs border border-[#b8b8b8] bg-[#f3f3f3]" />
          Alleen lezen
        </label>
        <label className="mt-2 flex items-center gap-[7px] leading-5">
          <input type="checkbox" className="ml-px h-[14px] w-[14px] appearance-none rounded-xs border border-[#b8b8b8] bg-[#f3f3f3]" />
          Verplicht
        </label>
      </div>
    </aside>
  );
}

/* ---------- right strip ---------- */

function RightButton({ label, dim, children }) {
  return (
    <button aria-label={label} className="h-6 w-6">
      <Icon className={dim ? "text-[#c0c0c0]" : "text-[#333333]"}>{children}</Icon>
    </button>
  );
}

function RightStrip() {
  return (
    <nav className="flex w-[54px] shrink-0 flex-col items-center gap-4 rounded-tr-2xl bg-[#ebebeb] pt-3 pr-[2px] pb-[10px]">
      <RightButton label="Zoeken">
        <circle cx="11.500" cy="11" r="6.500" strokeWidth="1.200" />
        <path d="M8.500 9.500v3" strokeWidth="1" />
        <path d="m16.500 16 3.500 3.300" strokeWidth="2.200" />
      </RightButton>
      <Sep />
      <RightButton label="OCR">
        <path d="M6 8V5.500Q6 4 7.500 4h9Q18 4 18 5.500V8M3 9.500h18M4.500 12v6.500Q4.500 20 6 20h12q1.500 0 1.500-1.500V12" strokeWidth="1.200" />
        <text x="6" y="17" fontSize="6" fontWeight="700" fontFamily="Noto Sans" fill="#333" stroke="none">OCR</text>
      </RightButton>
      <RightButton label="Converteren">
        <path d="M14.500 3.500h-7Q5.500 3.500 5.500 5.500v13q0 2 2 2h9q2 0 2-2V7.500ZM14.500 3.500v4h4" strokeWidth="1.200" />
        <path d="M9 14.500a3.300 3.300 0 0 1 3-4.800l1 0M15 10.800a3.300 3.300 0 0 1-3 4.900h-1M12.300 8.300l1.200 1.400-1.200 1.300M11.700 14.300l-1.200 1.400 1.200 1.300" />
      </RightButton>
      <RightButton label="Beveiligen">
        <path d="M18.500 11V7.500l-4-4h-7Q5.500 3.500 5.500 5.500v13q0 2 2 2H10M14.500 3.500v4h4" strokeWidth="1.200" />
        <rect x="12.500" y="14.500" width="7.500" height="6" rx="1" />
        <path d="M14.300 14.500v-1a1.900 1.900 0 0 1 3.900 0v1M16.200 17v1" />
      </RightButton>
      <RightButton label="Delen">
        <path d="M8 10.500H7q-2 0-2 2v5q0 2 2 2h10.500q2 0 2-2v-5q0-2-2-2H16M12.200 15V4M9 7l3.200-3.200L15.500 7" strokeWidth="1.200" />
      </RightButton>
      <RightButton label="E-mail">
        <rect x="4.500" y="5.500" width="15.500" height="13" rx="1.500" strokeWidth="1.200" />
        <path d="m7.500 9.500 4.700 3.500L17 9.500" strokeWidth="1.200" />
      </RightButton>
      <Sep />
      <RightButton label="Opslaan">
        <path d="M7 5q-1.500 0-1.500 2v10.500q0 2 2 2h9.500q2 0 2-2V8L16.500 5Z" strokeWidth="1.200" />
        <path d="M9.500 5v2.500h5V5" strokeWidth="1.200" />
        <circle cx="12.200" cy="13.500" r="2.500" strokeWidth="1.200" />
      </RightButton>
      <Sep />
      <RightButton label="Ongedaan maken">
        <path d="M10 6.500 7 9.500l3 3M7 9.500h7.500q3.500 0 3.500 3.700T14.500 17H9" strokeWidth="1.200" />
      </RightButton>
      <RightButton label="Opnieuw" dim>
        <path d="m14.500 6.500 3 3-3 3M17.500 9.500H10Q6.500 9.500 6.500 13.200T10 17h5.500" strokeWidth="1.200" />
      </RightButton>
      <div className="flex-1" />
      <button aria-label="UPDF AI" className="h-6 w-6">
        <svg width="24" height="24" viewBox="0 0 24 24" fill="none" strokeWidth="2" strokeLinecap="round">
          <path d="M5.500 12C3 8 4.500 4 8 4q2.500 0 4 2" stroke="#a96bf0" />
          <path d="M12 6c1.500-2 3-2 4-2 3.500 0 5 4 2.500 8" stroke="#3fa3ee" />
          <path d="M18.500 12c2.500 4 1 8-2.500 8q-2.500 0-4-2" stroke="#52cf92" />
          <path d="M12 18c-1.500 2-3 2-4 2-3.500 0-5-4-2.500-8" stroke="#f2b62c" />
        </svg>
      </button>
      <RightButton label="Opmerkingen">
        <path d="M5 4.500h14v12h-4.500L12 19.500 9.500 16.500H5ZM8 8.500h8M8 11.500h6" strokeWidth="1.200" />
      </RightButton>
    </nav>
  );
}

export default function App() {
  return (
    <div className="h-screen min-h-[716px] min-w-[1142px] bg-[#a9acaa] pt-px pr-px pb-[2px] pl-px">
      <div className={"flex h-full flex-col overflow-hidden rounded-lg bg-[#363636] " + UI}>
        <TitleBar />
        <main className="mx-[15px] flex min-h-0 flex-1">
          <LeftStrip />
          <Thumbnails />
          <section className="relative flex min-w-0 flex-1 flex-col bg-[#f6f6f6]">
            <FormToolbar />
            <div className="relative ml-5 h-[589px] w-[499px] bg-white shadow-sm">
              <TaxForm />
              <SignatureField />
            </div>
            <PageBar />
          </section>
          <Properties />
          <RightStrip />
        </main>
      </div>
    </div>
  );
}
